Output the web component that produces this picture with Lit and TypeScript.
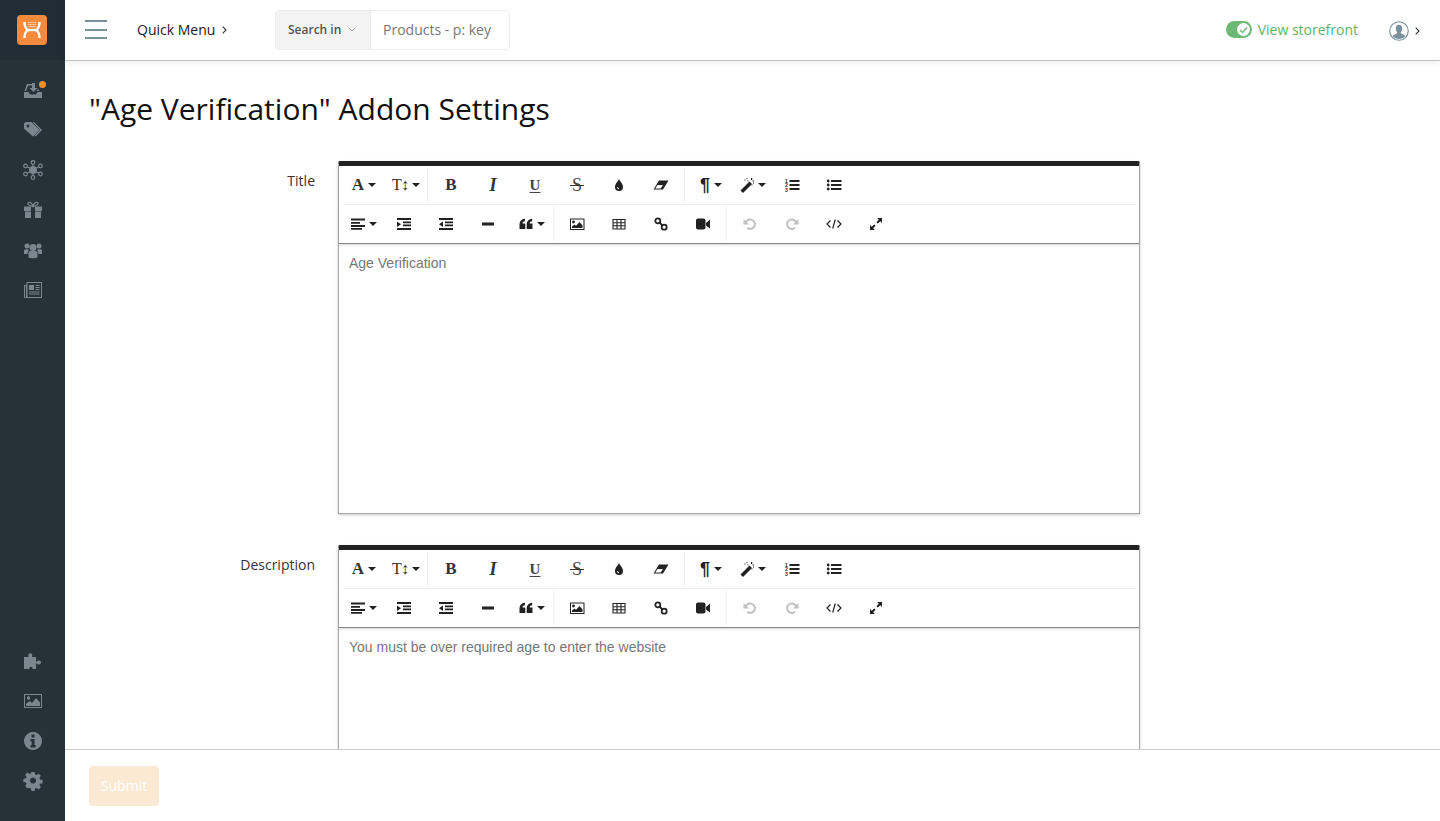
import { LitElement, html, css, svg, nothing } from "lit";
import { customElement } from "lit/decorators.js";

const ic = (w: number, h: number, body: unknown, cls = "") =>
  html`<svg class=${cls} width=${w} height=${h} viewBox="0 0 ${w} ${h}" aria-hidden="true">${body}</svg>`;

const side = {
  inbox: ic(20, 20, svg`<path d="M1 12h4.500l1.500 2.500h6L14.500 12H19v6H1z"/><path d="M4 4h5v1.500H5.200L3 11H1.500zM15 9l1.500 2H13.500z"/><path d="M9 3h3v5h2.500l-4 4-4-4H9z"/>`),
  tags: ic(20, 20, svg`<path d="M1 3.500 2.500 2H8.500l8 8-6.500 6.500L1 8.500z M5 4.500a1.500 1.500 0 1 0 .01 0z" fill-rule="evenodd"/><path d="M11 2l8 8-6.500 6.500-1-1L17 10 9.500 2z"/>`),
  net: ic(20, 20, svg`<circle cx="10" cy="10" r="4"/><g fill="none" stroke="currentColor" stroke-width="1.200"><circle cx="10" cy="2.500" r="1.800"/><circle cx="10" cy="17.500" r="1.800"/><circle cx="2.500" cy="6" r="1.800"/><circle cx="17.500" cy="6" r="1.800"/><circle cx="2.500" cy="14" r="1.800"/><circle cx="17.500" cy="14" r="1.800"/><path d="M10 4.300V6M10 14v1.700M4 6.800 7 8.300M16 6.800 13 8.300M4 13.200 7 11.700M16 13.200 13 11.700"/></g>`),
  gift: ic(20, 20, svg`<path d="M1 6.500h7v4.500H1zM12 6.500h7v4.500h-7zM2 11.500h6V18H2zM12 11.500h6V18h-6z"/><path d="M10 6.500C8 6 5 5.500 5 3.800 5 1.500 8.500 1.500 10 6c1.500-4.500 5-4.500 5-2.200 0 1.700-3 2.200-5 2.700z" fill="none" stroke="currentColor" stroke-width="1.300"/>`),
  users: ic(20, 20, svg`<circle cx="4" cy="6" r="2.500"/><circle cx="16" cy="6" r="2.500"/><circle cx="10" cy="7.500" r="3.500"/><path d="M1 10C2 9 6 9 6 10.500 4.800 11.500 4.500 13 4.500 14H1zM19 10C18 9 14 9 14 10.500 15.200 11.500 15.500 13 15.500 14H19z"/><path d="M5.500 13c0-1.500 1.500-2 2-2h5c.5 0 2 .5 2 2v4.500c-2 1-7 1-9 0z"/>`),
  news: ic(20, 20, svg`<path d="M3.500 2h15.500v16H2A1 1 0 0 1 1 17V5h2.500z M3 6H2v11h1z M4.500 3V17h13.500V3z" fill-rule="evenodd"/><path d="M6 5h5v5H6zM12.500 5h4v1h-4zM12.500 7h4v1h-4zM12.500 9h4v1h-4zM6 11.500h10.500v1H6zM6 13.500h10.500v1H6z"/>`),
  puzzle: ic(20, 20, svg`<path d="M1 6h4.500V5.200a2 2 0 1 1 3.500 0V6h4v4.500h.8a1.600 1.600 0 0 1 0 .1c.6-.9 1.200-1.100 2.200-1.100a2 2 0 1 1 0 4c-1 0-1.600-.3-2.200-1h-.8V18H9.500v-1.500a1.800 1.800 0 0 0-3 0V18H1z"/>`),
  image: ic(20, 20, svg`<path d="M1 3h18v14H1z M2 4v12h16V4z" fill-rule="evenodd"/><circle cx="5.500" cy="7" r="1.700"/><path d="M3 15v-2l3.500-3 2.500 2 4-5 4 4.500V15z"/>`),
  info: ic(20, 20, svg`<path fill-rule="evenodd" d="M10 1a9 9 0 1 0 .01 0z M8.500 3.500h3v3h-3z M7.500 8h4v6h1.200v2.500H7.500V14h1.200V10.500H7.500z"/>`),
  gear: ic(20, 20, svg`<path fill-rule="evenodd" d="M8.300 1h3.400l.5 2.700 1.500.6 2.300-1.500 2.300 2.300-1.500 2.300.6 1.500 2.700.5v3.400l-2.700.5-.6 1.500 1.500 2.300-2.300 2.300-2.300-1.500-1.500.6-.5 2.700H8.300l-.5-2.700-1.500-.6L4 18.200l-2.300-2.300 1.500-2.300-.6-1.500L-.1 11.600V8.200l2.700-.5.6-1.500-1.500-2.300L4 1.600l2.300 1.500 1.500-.6z M10 6.800a3.200 3.200 0 1 0 .01 0z" transform="translate(.5 0) scale(.95)"/>`),
};

const tb: Record<string, unknown> = {
  drop: ic(14, 14, svg`<path fill-rule="evenodd" d="M7 1c1 2.500 4 4.500 4 8a4 4 0 0 1-8 0c0-3.500 3-5.500 4-8z M5.200 9a1.800 1.800 0 0 0 1.800 2.300v-1A1 1 0 0 1 6 9z"/>`),
  eraser: ic(16, 14, svg`<path fill-rule="evenodd" d="M6 2.500H15.500L10 11.500H.5z M4.500 7 2.200 10.500H7.800L10 7z"/>`),
  wand: ic(14, 16, svg`<path d="M.5 13.500 9.500 4.500l2.500 2.500-9 9z"/><path d="M11 1h1.200v2H11zM12.500 3.500h1.500v1h-1.500zM6.500 1h1v1h-1zM4.500 2.500h1v1h-1zM7.500 3.500h1v1h-1zM11.500 7.500h1v1h-1zM13 5.500h1v1h-1z"/>`),
  ol: ic(16, 14, svg`<path d="M5.500 2h10v2h-10zM5.500 6h10v2h-10zM5.500 10h10v2h-10z"/><g font-family="Liberation Sans, sans-serif" font-size="5" font-weight="700"><text x="1" y="4.500">1</text><text x="1" y="9">2</text><text x="1" y="13.500">3</text></g>`),
  ul: ic(16, 14, svg`<path d="M5 2h10.500v2H5zM5 6h10.500v2H5zM5 10h10.500v2H5z"/><circle cx="2.200" cy="3" r="1.400"/><circle cx="2.200" cy="7" r="1.400"/><circle cx="2.200" cy="11" r="1.400"/>`),
  align: ic(14, 14, svg`<path d="M0 1.500h14v2H0zM0 5h9v1.800H0zM0 8h14v2H0zM0 11h11v1.800H0z"/>`),
  indent: ic(16, 14, svg`<path d="M1 1h14v2H1zM7 4.500h8v1.700H7zM7 7.500h8v1.700H7zM1 11h14v2H1zM1 4.500l4 2.800-4 2.800z"/>`),
  outdent: ic(16, 14, svg`<path d="M1 1h14v2H1zM7 4.500h8v1.700H7zM7 7.500h8v1.700H7zM1 11h14v2H1zM5 4.500v5.600L1 7.300z"/>`),
  hr: ic(14, 14, svg`<rect x="1" y="5.500" width="12" height="3"/>`),
  quote: ic(14, 12, svg`<path d="M.5 11V6.500C.5 3 2.500 1.200 6 .8v2.400C4 3.500 3.500 4.200 3.500 5.500H6.300V11zM7.700 11V6.500C7.700 3 9.700 1.200 13.200.8v2.400C11.200 3.500 10.700 4.200 10.700 5.500H13.500V11z"/>`),
  picture: ic(16, 14, svg`<path fill-rule="evenodd" d="M1 1.500h14.500v11.500H1z M2 2.500v9.500h12.500V2.500z"/><circle cx="4.500" cy="5" r="1.400"/><path d="M3 11V9.500l2.500-2 1.500 1.300L10.500 5l3 3.500V11z"/>`),
  table: ic(14, 12, svg`<path d="M1 1.500h12v9.500H1zM1 4.700h12M1 7.800h12M5 1.500v9.500M9 1.500v9.500" fill="none" stroke="currentColor" stroke-width="1.100"/>`),
  link: ic(14, 14, svg`<g fill="none" stroke="currentColor" stroke-width="1.800"><circle cx="3.800" cy="3.800" r="2.500"/><circle cx="10.200" cy="10.200" r="2.500"/><path d="M5.500 5.500l3 3"/></g>`),
  video: ic(16, 14, svg`<path d="M1 3.500A2 2 0 0 1 3 1.500h5.500a2 2 0 0 1 2 2v7a2 2 0 0 1-2 2H3a2 2 0 0 1-2-2z"/><path d="M11 6 15 2.500v9L11 8.500z"/>`),
  undo: ic(14, 14, svg`<path d="M2.500 7a4.700 4.700 0 1 1 1.700 3.800" fill="none" stroke="currentColor" stroke-width="2"/><path d="M.5 2v5.500H6z"/>`, "dim"),
  redo: ic(14, 14, svg`<path d="M11.500 7a4.700 4.700 0 1 0-1.700 3.800" fill="none" stroke="currentColor" stroke-width="2"/><path d="M13.500 2v5.500H8z"/>`, "dim"),
  code: ic(16, 12, svg`<path d="M4.500 2.500 1 6l3.500 3.500M11.500 2.500 15 6l-3.500 3.500M9.300 1.500 6.700 10.500" fill="none" stroke="currentColor" stroke-width="1.200"/>`),
  expand: ic(14, 14, svg`<path d="M8 1h5v5l-1.800-1.800-2.400 2.400-1.400-1.400 2.400-2.400zM6 13H1V8l1.800 1.800 2.400-2.400 1.400 1.400-2.400 2.400z"/>`),
};

type Btn = { t?: string; cls?: string; i?: string; dd?: boolean; m?: string; sep?: boolean };

const row1: Btn[] = [
  { t: "A", cls: "bold", dd: true },
  { t: "T↕", cls: "ts", dd: true },
  { sep: true },
  { t: "B", cls: "bold", m: "gap2" },
  { t: "I", cls: "ital" },
  { t: "U", cls: "und" },
  { t: "S", cls: "strike" },
  { i: "drop" },
  { i: "eraser" },
  { sep: true, m: "sep2" },
  { t: "¶", cls: "para", dd: true, m: "gap5" },
  { i: "wand", dd: true },
  { i: "ol", m: "back3" },
  { i: "ul" },
];
const row2: Btn[] = [
  { i: "align", dd: true },
  { i: "indent", m: "back2" },
  { i: "outdent" },
  { i: "hr" },
  { i: "quote", dd: true, m: "gap2" },
  { sep: true },
  { i: "picture", m: "gap2" },
  { i: "table" },
  { i: "link" },
  { i: "video" },
  { sep: true, m: "sep2" },
  { i: "undo", m: "gap2" },
  { i: "redo" },
  { i: "code" },
  { i: "expand" },
];

const chev = () => html`<svg class="chev" width="5" height="8" viewBox="0 0 5 8"><path d="M.7.700 4 4 .7 7.300" fill="none" stroke="currentColor" stroke-width="1.100"/></svg>`;

@customElement("app-root")
export class AppRoot extends LitElement {
  static styles = css`
    :host { display: flex; height: 821px; width: 1440px; overflow: hidden; font-family: "Open Sans", sans-serif; color: #222; background: #fff; }
    .side { width: 65px; flex: none; background: #263238; display: flex; flex-direction: column; color: #7b878f; }
    .brand { height: 60px; flex: none; background: #212d35; display: flex; align-items: center; padding-left: 17px; }
    .logo { width: 30px; height: 30px; border-radius: 4px; background: #f58a3d; display: flex; align-items: center; justify-content: center; color: #fff; }
    .nav { display: flex; flex-direction: column; padding-top: 10px; flex: 1; }
    .nav.low { flex: none; padding: 0 0 20px; }
    .ni { height: 40px; display: flex; align-items: center; justify-content: center; position: relative; }
    .ni svg { fill: currentColor; }
    .dot { position: absolute; left: 39px; top: 11px; width: 7px; height: 7px; border-radius: 50%; background: #f28c28; }
    .main { flex: 1; min-width: 0; display: flex; flex-direction: column; }
    .top { height: 61px; flex: none; box-sizing: border-box; border-bottom: 1px solid #c4c4c4; box-shadow: 0 2px 6px rgba(0,0,0,.07); display: flex; align-items: center; position: relative; z-index: 1; background: #fff; }
    .burger { margin: 0 0 1px 20px; width: 22px; display: flex; flex-direction: column; gap: 6.500px; }
    .burger i { display: block; height: 2px; background: #78909c; }
    .qm { margin: 0 0 1px 30px; font-size: 14px; color: #222; display: flex; align-items: center; gap: 7px; width: 138px; }
    .chev { color: #333; }
    .search { display: flex; height: 40px; box-sizing: border-box; border: 1px solid #eee; border-radius: 4px; width: 235px; overflow: hidden; }
    .search .in { width: 95px; box-sizing: border-box; background: #f3f3f3; border-right: 1px solid #eee; font-size: 12px; font-weight: 600; color: #555; display: flex; align-items: center; padding: 0 0 1px 12px; gap: 7px; }
    .search .ph { font-size: 14px; color: #777; display: flex; align-items: center; padding: 0 0 1px 12px; }
    .spacer { flex: 1; }
    .store { display: flex; align-items: center; gap: 6px; color: #5cb56a; font-size: 14px; margin: 0 31px 1px 0; }
    .toggle { width: 26px; height: 17px; border-radius: 9px; background: #6bb974; display: flex; align-items: center; justify-content: flex-end; padding-right: 2px; box-sizing: border-box; }
    .toggle b { width: 13px; height: 13px; border-radius: 50%; background: #fff; display: flex; align-items: center; justify-content: center; }
    .user { display: flex; align-items: center; gap: 6px; margin: 2px 20px 0 0; }
    .body { flex: 1; min-height: 0; overflow: hidden; padding: 0 24px; }
    h1 { margin: 27px 0 0; font-size: 30px; line-height: 42px; font-weight: 400; color: #111; }
    .field { display: flex; margin-top: 31px; }
    .label { width: 226px; flex: none; text-align: right; font-size: 14px; line-height: 20px; padding-top: 10px; color: #333; }
    .ed { margin-left: 23px; width: 802px; height: 353px; flex: none; box-sizing: border-box; border-top: 5px solid #222; border-left: 1px solid #aaa; border-right: 1px solid #aaa; border-bottom: 1px solid #aaa; box-shadow: 0 1px 3px rgba(0,0,0,.22); border-radius: 2px 2px 0 0; background: #fff; }
    .bar { border-bottom: 1px solid #888; box-shadow: 0 1px 2px rgba(0,0,0,.18); padding: 0 3px 0 4px; }
    .row { display: flex; align-items: center; height: 38px; }
    .row + .row { border-top: 1px solid #eee; }
    .b { width: 42px; height: 34px; flex: none; display: flex; align-items: center; justify-content: center; color: #222; gap: 4px; font-family: "Liberation Serif", serif; font-size: 16px; }
    .b svg { fill: currentColor; display: block; }
    .b .dim { color: #c0c0c0; }
    .caret { width: 0; height: 0; border-left: 4px solid transparent; border-right: 4px solid transparent; border-top: 4px solid #222; flex: none; }
    .sep { width: 1px; height: 34px; background: #eee; flex: none; }
    .sep2 { margin-left: 2px; }
    .gap2 { margin-left: 2px; }
    .gap5 { margin-left: 5px; }
    .back3 { margin-left: -3px; }
    .back2 { margin-left: -2px; }
    .bold { font-weight: 700; font-size: 17px; color: #333; }
    .ts { font-size: 16px; letter-spacing: -1px; color: #333; }
    .ital { font-style: italic; font-weight: 700; font-size: 18px; color: #333; }
    .und { text-decoration: underline; text-underline-offset: 2px; font-size: 15px; font-weight: 700; color: #444; }
    .strike { font-size: 18px; color: #444; position: relative; }
    .strike::after { content: ""; position: absolute; left: -2px; right: -2px; top: 10px; height: 1px; background: #333; }
    .para { font-size: 18px; font-weight: 700; font-family: "Liberation Sans", sans-serif; }
    .txt { padding: 9px 10px; font-family: "Liberation Sans", sans-serif; font-size: 14px; line-height: 20px; color: #777; }
    .foot { height: 72px; flex: none; box-sizing: border-box; border-top: 1px solid #ccc; display: flex; align-items: center; padding-left: 24px; background: #fff; }
    .submit { width: 70px; height: 40px; border-radius: 4px; background: #fbe9d3; color: #fff; font-size: 14px; display: flex; align-items: center; justify-content: center; }
  `;

  private btn(b: Btn) {
    if (b.sep) return html`<div class="sep ${b.m ?? ""}"></div>`;
    return html`<div class="b ${b.m ?? ""}">
      ${b.t ? html`<span class=${b.cls ?? ""}>${b.t}</span>` : tb[b.i!]}
      ${b.dd ? html`<span class="caret"></span>` : nothing}
    </div>`;
  }

  private editor(label: string, text: string) {
    return html`<div class="field">
      <div class="label">${label}</div>
      <div class="ed">
        <div class="bar">
          <div class="row">${row1.map((b) => this.btn(b))}</div>
          <div class="row">${row2.map((b) => this.btn(b))}</div>
        </div>
        <div class="txt">${text}</div>
      </div>
    </div>`;
  }

  render() {
    return html`
      <aside class="side">
        <div class="brand"><div class="logo">
          <svg width="24" height="24" viewBox="0 0 24 24" fill="none" stroke="currentColor">
            <path d="M4.500 4c0 4 1 6.500 3.500 8H16c2.500-1.500 3.500-4 3.500-8" stroke-width="2.400"/>
            <path d="M8 12c-2.500 1.500-3.500 4.500-3.500 8M16 12c2.500 1.500 3.500 4.500 3.500 8" stroke-width="2.400"/>
            <path d="M8.500 4.500h7M8.500 6.500h7M8.500 8.500h7" stroke-width="1.100" stroke-dasharray="1 1"/>
          </svg>
        </div></div>
        <nav class="nav">
          <div class="ni">${side.inbox}<span class="dot"></span></div>
          <div class="ni">${side.tags}</div>
          <div class="ni">${side.net}</div>
          <div class="ni">${side.gift}</div>
          <div class="ni">${side.users}</div>
          <div class="ni">${side.news}</div>
        </nav>
        <nav class="nav low">
          <div class="ni">${side.puzzle}</div>
          <div class="ni">${side.image}</div>
          <div class="ni">${side.info}</div>
          <div class="ni">${side.gear}</div>
        </nav>
      </aside>
      <div class="main">
        <header class="top">
          <div class="burger"><i></i><i></i><i></i></div>
          <div class="qm">Quick Menu ${chev()}</div>
          <div class="search">
            <div class="in">Search in
              <svg width="8" height="5" viewBox="0 0 8 5"><path d="M.5.500 4 4 7.500.500" fill="none" stroke="#aaa"/></svg>
            </div>
            <div class="ph">Products - p: key</div>
          </div>
          <div class="spacer"></div>
          <div class="store">
            <span class="toggle"><b><svg width="9" height="8" viewBox="0 0 9 8"><path d="M1 4l2.500 2.500L8 1.500" fill="none" stroke="#6bb974" stroke-width="1.400"/></svg></b></span>
            View storefront
          </div>
          <div class="user">
            <svg width="20" height="20" viewBox="0 0 21 21">
              <circle cx="10.500" cy="10.500" r="9.700" fill="#fff" stroke="#78909c" stroke-width="1.200"/>
              <path d="M10.500 4c2.200 0 3.400 1.600 3.400 3.800 0 1.600-.6 3-1.500 3.900v1.200l3.600 1.700c.8.400 1 1 1 1.800-1.700 1.500-4 2.500-6.500 2.500s-4.800-1-6.500-2.500c0-.8.200-1.400 1-1.800l3.600-1.700v-1.200c-.9-.9-1.500-2.300-1.500-3.900C7.100 5.600 8.300 4 10.500 4z" fill="#78909c"/>
            </svg>
            ${chev()}
          </div>
        </header>
        <section class="body">
          <h1>"Age Verification" Addon Settings</h1>
          ${this.editor("Title", "Age Verification")}
          ${this.editor("Description", "You must be over required age to enter the website")}
        </section>
        <footer class="foot"><div class="submit">Submit</div></footer>
      </div>
    `;
  }
}
